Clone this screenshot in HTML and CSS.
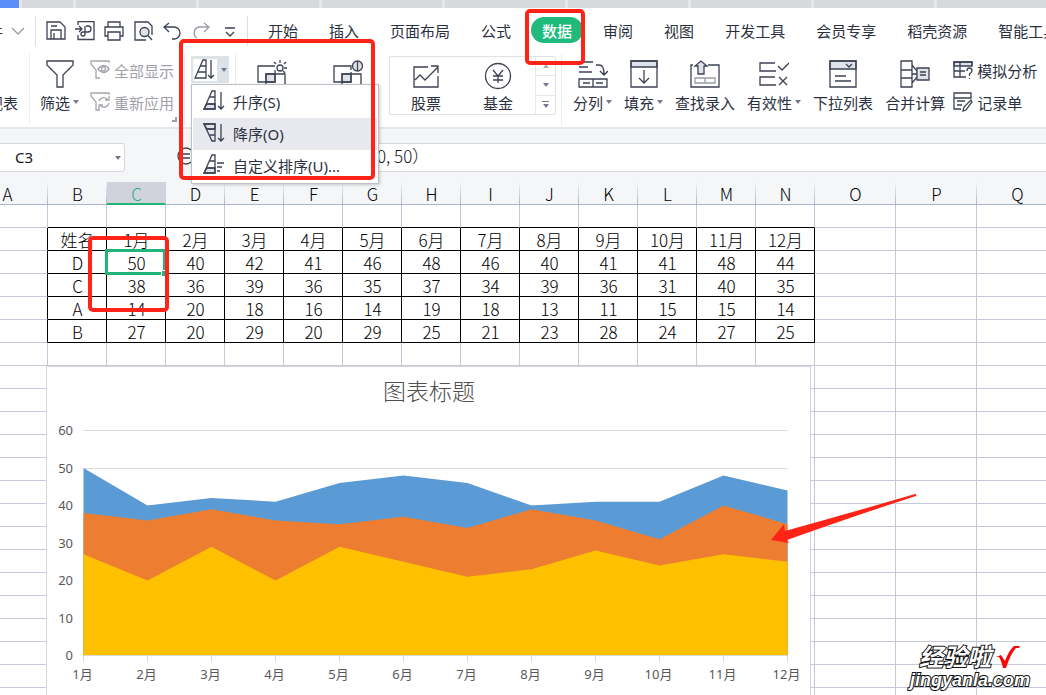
FILE: index.html
```html
<!DOCTYPE html>
<html lang="zh-CN">
<head>
<meta charset="utf-8">
<meta name="viewport" content="width=device-width, initial-scale=1">
<title>表格</title>
<link rel="stylesheet" href="styles.css">
</head>
<body>
<div class="app">
  <div class="doc-tabs">
    <span class="doc-tab doc-home"></span><span class="doc-tab doc-short"></span><span class="doc-tab"></span><span class="doc-tab"></span><span class="doc-tab"></span><span class="doc-tab"></span><span class="doc-tab"></span><span class="doc-tab"></span><span class="doc-tab"></span><span class="doc-tab"></span>
  </div>

  <nav class="menu-row">
    <button class="file-button" type="button">文件
      <svg width="14" height="8" viewBox="0 0 14 8"><path class="grey" d="M1 1l6 6 6-6"/></svg>
    </button>
    <span class="rule"></span>
    <div class="quick">
      <button type="button" aria-label="保存"><svg width="20" height="20" viewBox="0 0 20 20"><path d="M1 1h13l5 5v12H1zM5 18V9h10v9M5 5h6M8 12v6"/></svg></button>
      <button type="button" aria-label="输出为PDF"><svg width="20" height="20" viewBox="0 0 20 20"><path d="M3 4V0.500h16v18H3V14M0 8h7M4 5l3 3-3 3M10 5v8a2 2 0 1 1-2-2h5a3 3 0 0 0 0-6h-2"/></svg></button>
      <button type="button" aria-label="打印"><svg width="20" height="20" viewBox="0 0 20 20"><path d="M4 6V1h12v5M4 15H1V6h18v9h-3M4 11h12v8H4z"/></svg></button>
      <button type="button" aria-label="打印预览"><svg width="20" height="20" viewBox="0 0 20 20"><path d="M13 19H2V1h13l4 4v9"/><circle class="tint" cx="11.500" cy="11" r="4.500"/><path d="M15 14.500L19 19"/></svg></button>
      <button type="button" aria-label="撤销"><svg width="20" height="20" viewBox="0 0 20 20"><path d="M7 2L2 6l5 5M2 6h10a6 6 0 0 1 0 12h-2"/></svg></button>
      <button type="button" aria-label="恢复"><svg width="20" height="20" viewBox="0 0 20 20"><path class="grey" d="M13 2l5 4-5 5M18 6H8a6 6 0 0 0-2 11"/></svg></button>
      <button type="button" aria-label="自定义"><svg width="20" height="20" viewBox="0 0 20 20"><path d="M5 7h10M6 11l4 4 4-4"/></svg></button>
    </div>
    <span class="rule"></span>
    <div class="tabs">
      <button type="button">开始</button><button type="button">插入</button><button type="button">页面布局</button><button type="button">公式</button><button type="button" class="active">数据</button><button type="button">审阅</button><button type="button">视图</button><button type="button">开发工具</button><button type="button">会员专享</button><button type="button">稻壳资源</button><button type="button">智能工具</button>
    </div>
  </nav>

  <div class="ribbon">
    <button type="button" class="tool pivot"><span class="icon"></span><span class="label">数据透视表</span></button>
    <span class="divider"></span>
    <button type="button" class="tool filter">
      <span class="icon"><svg width="28" height="28" viewBox="0 0 28 28"><path d="M1 1h26v4l-10 10v12h-6V15L1 5z"/></svg></span>
      <span class="label">筛选<i class="caret"></i></span>
    </button>
    <div class="stack muted">
      <button type="button"><svg width="20" height="20" viewBox="0 0 20 20"><path d="M10 18H6v-8L1 4V1h18v2"/><path d="M8 9q6-7 11 0-5 7-11 0z"/><circle cx="13.500" cy="9" r="2"/></svg>全部显示</button>
      <button type="button"><svg width="20" height="20" viewBox="0 0 20 20"><path d="M10 18H6v-8L1 4V1h18v2M9 9a5 5 0 0 1 9-1M19 4v4h-4M19 11a5 5 0 0 1-9 2M9 17v-4h4"/></svg>重新应用</button>
    </div>
    <span class="launcher"></span>
    <span class="divider"></span>
    <div class="sort-holder">
      <button type="button" class="sort-button" aria-label="排序">
        <span class="sort-face"><svg width="22" height="22" viewBox="0 0 22 22"><path d="M9 1h3v18H1zM7 7h5M4 13h8M17 1v18M14 16l3 3 3-3"/></svg></span><i class="caret"></i>
      </button>
      <div class="sort-menu">
        <button type="button"><svg width="22" height="22" viewBox="0 0 22 22"><path class="tint" d="M4 14h8v5H1z"/><path d="M9 1h3v18H1zM7 7h5M4 14h8M18 2v17M15 16l3 3 3-3"/></svg>升序(S)</button>
        <button type="button" class="hover"><svg width="22" height="22" viewBox="0 0 22 22"><path class="tint" d="M1 2h11v5H4z"/><path d="M1 2h11v17H9zM4 7h8M7 13h5M18 2v17M15 16l3 3 3-3"/></svg>降序(O)</button>
        <button type="button"><svg width="22" height="22" viewBox="0 0 22 22"><path class="tint" d="M4 14h8v5H1z"/><path d="M9 1h3v18H1zM7 7h5M4 14h8M14 9h7M14 13h5M14 17h3"/></svg>自定义排序(U)...</button>
      </div>
    </div>
    <span class="divider"></span>
    <div class="dup-tools">
      <button type="button" class="tool" aria-label="重复项"><span class="icon"><svg width="30" height="28" viewBox="0 0 30 28"><path class="tint" d="M9 14h9v8H9z"/><path d="M18 10v12H1V6h17M9 27V14h19v13"/><circle cx="23" cy="8" r="3"/><path d="M23 0v3M17 2l2 2M29 2l-2 2M27 8h3M28 13l-2-2"/></svg></span></button>
      <button type="button" class="tool" aria-label="数据对比"><span class="icon"><svg width="30" height="28" viewBox="0 0 30 28"><path class="tint" d="M9 14h9v8H9z"/><path d="M18 12v10H1V6h17v4M9 27V14h19v13"/><circle class="tint" cx="24.500" cy="6" r="5"/><path d="M24.500 1v10"/></svg></span></button>
    </div>
    <div class="gallery">
      <button type="button" class="tool"><span class="icon"><svg width="28" height="28" viewBox="0 0 28 28"><path d="M16 5H2v20h24V14M3 18l5-5 5 5L26 5M19 4h7v7"/></svg></span><span class="label">股票</span></button>
      <button type="button" class="tool"><span class="icon"><svg width="28" height="28" viewBox="0 0 28 28"><circle cx="14" cy="14" r="12.500"/><path d="M9 8l5 6 5-6M14 14v7M9 14h10M9 18h10"/></svg></span><span class="label">基金</span></button>
      <div class="scroller">
        <button type="button" aria-label="上一行"><i class="caret up"></i></button>
        <button type="button" aria-label="下一行"><i class="caret"></i></button>
        <button type="button" aria-label="更多"><i class="bar"></i><i class="caret"></i></button>
      </div>
    </div>
    <span class="divider"></span>
    <div class="data-tools">
      <button type="button" class="tool"><span class="icon"><svg width="30" height="28" viewBox="0 0 30 28"><path d="M1 2h14M1 7h9M1 12h13M18 5h3q5 0 5 9M22 11l4 4 4-4M1 19h28v8H1zM15 19v8M5 23h7M18 23h7"/></svg></span><span class="label">分列<i class="caret"></i></span></button>
      <button type="button" class="tool"><span class="icon"><svg width="28" height="28" viewBox="0 0 28 28"><path class="tint" d="M1 1h26v6H1z"/><path d="M1 1h26v26H1zM14 10v13M9 18l5 5 5-5"/></svg></span><span class="label">填充<i class="caret"></i></span></button>
      <button type="button" class="tool"><span class="icon"><svg width="30" height="28" viewBox="0 0 30 28"><path d="M3 5H1v22h28V5H18"/><path class="tint" d="M8 14V6H5l6-5 6 5h-3v8z"/><path class="grey" d="M5 18h20v5H5zM15 18v5"/></svg></span><span class="label">查找录入</span></button>
      <button type="button" class="tool"><span class="icon"><svg width="30" height="28" viewBox="0 0 30 28"><path d="M16 3H1v8h16M19 6l4 4 7-7M16 17H1v8h16M20 17l8 8M28 17l-8 8"/></svg></span><span class="label">有效性<i class="caret"></i></span></button>
      <button type="button" class="tool"><span class="icon"><svg width="28" height="28" viewBox="0 0 28 28"><path class="tint" d="M1 1h26v8H1z"/><path d="M1 1h26v26H1zM17 4l3 3 3-3M6 16h11M6 21h16"/></svg></span><span class="label">下拉列表</span></button>
      <button type="button" class="tool"><span class="icon"><svg width="30" height="28" viewBox="0 0 30 28"><path d="M1 1h11v26H1zM1 10h11M1 18h11M12 5l5 6M12 14h5M12 23l5-6"/><path class="tint" d="M17 8h12v12H17z"/><path d="M20 12h6M20 15h6"/></svg></span><span class="label">合并计算</span></button>
    </div>
    <div class="stack">
      <button type="button"><svg width="20" height="20" viewBox="0 0 20 20"><path class="tint" d="M1 2h18v4H1z"/><path d="M13 17H1V2h18v4M1 11h11M7 2v15M14 11q0-3 2.500-3t2.500 3q0 1-2.500 3v2M16.500 18v1"/></svg>模拟分析</button>
      <button type="button"><svg width="20" height="20" viewBox="0 0 20 20"><path d="M8 17H1V1h17v5H1M4 9h8M4 13h5M10 19l1-4 7-7 1 2-6 8z"/></svg>记录单</button>
    </div>
  </div>

  <div class="formula-row">
    <div class="name-box"><input type="text" value="C3" aria-label="名称框"><i class="caret"></i></div>
    <svg class="fx" width="18" height="18" viewBox="0 0 18 18"><circle cx="9" cy="9" r="8"/><path d="M5 7h8M5 11h8"/></svg>
    <input class="formula" type="text" value="0, 50）" aria-label="编辑栏">
  </div>

  <main class="sheet">
    <table class="grid">
      <colgroup><col class="wide"><col span="13"><col class="wide" span="3"></colgroup>
      <thead><tr><th>A</th><th>B</th><th class="current">C</th><th>D</th><th>E</th><th>F</th><th>G</th><th>H</th><th>I</th><th>J</th><th>K</th><th>L</th><th>M</th><th>N</th><th>O</th><th>P</th><th>Q</th></tr></thead>
      <tbody id="rows"></tbody>
    </table>

    <svg class="chart" width="766" height="340" viewBox="46 366 766 340" role="img" aria-label="图表标题">
      <rect class="frame" x="46.5" y="366.5" width="764" height="350"/>
      <text class="chart-title" x="429" y="400">图表标题</text>
      <g id="axes"></g>
      <g id="areas"></g>
      <g id="ticks"></g>
    </svg>
    <svg class="arrow" width="148" height="52" viewBox="0 0 148 52"><path d="M1 47L14 31l1 7Q80 20 145 1q2 0 1 2Q90 21 17 47l2 3z"/></svg>
    <div class="watermark"><div class="wm-top">经验啦<svg width="26" height="24" viewBox="0 0 26 24"><path d="M1 12l5-2 4 6Q14 5 19 1h6l-1 2h-3Q16 8 11 23H8Q6 15 4 12z"/></svg></div><div class="wm-url">jingyanla.com</div></div>
  </main>
  <div class="mark mark-sort"></div>
  <div class="mark mark-tab"></div>
  <div class="mark mark-cells"></div>
</div>
<script src="sheet.js"></script>
</body>
</html>
```
FILE: styles.css
```css
* { box-sizing: border-box; }
body { margin: 0; font-family: "Noto Sans", "Noto Sans CJK SC", sans-serif; font-size: 15px; color: #2b3040; background: #fff; }
button { margin: 0; padding: 0; border: 0; background: none; font: inherit; color: inherit; white-space: nowrap; }
input { font: inherit; color: #15171d; border: 0; outline: 0; }
svg { display: block; flex: none; fill: none; stroke: #3d4254; stroke-width: 1.3; }
svg .tint { fill: #dfe2e8; }
svg .grey { stroke: #9a9da5; }
.app { position: relative; display: flex; flex-direction: column; height: 100vh; overflow: hidden; }

.doc-tabs { display: flex; flex: none; gap: 3px; height: 8px; background: #e6e7ea; overflow: hidden; }
.doc-tab { flex: 0 0 120px; background: #d8d9dd; }
.doc-home { flex-basis: 19px; background: #5b8df6; }
.doc-short { flex-basis: 51px; }

.menu-row { display: flex; flex: none; align-items: center; height: 46px; overflow: hidden; }
.file-button { display: flex; align-items: center; gap: 8px; margin-left: -27px; margin-right: 10px; }
.rule { flex: none; width: 1px; height: 30px; background: #dcdde1; }
.quick { display: flex; gap: 9px; padding: 0 7px 0 10px; }
.tabs { display: flex; align-items: center; gap: 31px; height: 46px; padding: 0 0 2px 20px; }
.tabs .active { margin: 0 -11px; padding: 0 11px; height: 26px; border-radius: 13px; background: #21ba7d; color: #fff; font-weight: 500; }

.ribbon { display: flex; flex: none; height: 75px; padding-bottom: 2px; border-bottom: 2px solid #e6e7ea; }
.divider { flex: none; width: 1px; background: #ebecef; }
.tool { display: flex; flex: none; flex-direction: column; align-items: center; padding-top: 6px; }
.icon { display: flex; height: 28px; }
.label { display: flex; align-items: center; height: 28px; }
.caret { display: inline-block; flex: none; margin-left: 3px; border: 3px solid transparent; border-top: 4px solid #737a91; border-bottom: 0; }
.caret.up { border-top: 0; border-bottom: 4px solid #a9adba; }
.pivot { margin-left: -57px; margin-right: 11px; }
.filter { margin-left: 10px; margin-right: 11px; }
.stack { display: flex; flex: none; flex-direction: column; gap: 10px; padding-top: 5px; }
.stack button { display: flex; align-items: center; gap: 4px; height: 22px; }
.muted { color: #9fa1a8; }
.muted svg { stroke: #a4a6ad; }
.launcher { align-self: flex-end; flex: none; width: 5px; height: 5px; margin: 0 7px 3px -2px; border: solid #9aa0b0; border-width: 0 2px 2px 0; }
.sort-holder { position: relative; padding: 2px 6px 0; }
.sort-button { display: flex; align-items: center; width: 38px; height: 27px; padding: 2px; background: #dde2e7; border-radius: 1px; }
.sort-face { padding: 0 1px; background: #fff; }
.sort-button .caret { margin-left: 4px; }
.sort-menu { position: absolute; z-index: 3; top: 30px; left: 6px; width: 188px; padding: 1px; background: #fff; border: 1px solid #bfc1c7; box-shadow: 1px 1px 3px #0003; }
.sort-menu button { display: flex; align-items: center; gap: 8px; width: 100%; height: 32px; padding: 0 0 2px 10px; }
.sort-menu .hover { background: #e7e9ee; }
.dup-tools { display: flex; gap: 46px; padding-left: 21px; }
.gallery { display: flex; flex: none; height: 59px; margin: 2px 5px 0 26px; border: 1px solid #dfe1e5; border-radius: 2px; }
.gallery .tool { width: 72px; padding-top: 5px; }
.scroller { display: flex; flex-direction: column; width: 20px; margin-left: 1px; border-left: 1px solid #e6e8ec; }
.scroller button { display: flex; flex: 1; flex-direction: column; align-items: center; justify-content: center; gap: 2px; border-bottom: 1px solid #e6e8ec; }
.scroller button:last-child { border: 0; }
.scroller .caret { margin: 0; }
.bar { width: 7px; height: 1px; background: #737a91; }
.data-tools { display: flex; gap: 12px; margin: 0 8px 0 11px; }

.formula-row { display: flex; flex: none; align-items: center; height: 53px; padding: 14px 0 10px; background: #f5f6f8; }
.name-box { display: flex; align-items: center; width: 125px; height: 29px; padding-right: 3px; background: #fff; border: 1px solid #d6d8de; border-left: 0; border-radius: 0 3px 3px 0; }
.name-box input { flex: 1; min-width: 0; padding: 0 0 2px 15px; }
.fx { margin: 0 2px 4px 52px; }
.formula { flex: 1; min-width: 0; height: 29px; padding: 0 0 4px 180px; border: solid #d6d8de; border-width: 1px 0; font-family: "Noto Sans CJK SC", sans-serif; font-size: 17px; font-weight: 300; }

.sheet { position: relative; flex: 1; min-height: 0; overflow: hidden; }
.grid { width: 1089px; margin-left: -33px; table-layout: fixed; border-collapse: separate; border-spacing: 0; font-family: "Noto Sans CJK SC", sans-serif; font-size: 17px; font-weight: 300; color: #000; }
.grid col { width: 59px; }
.grid col.wide { width: 81px; }
.grid th, .grid td { height: 23px; padding: 2px 0 0 1px; line-height: 18px; text-align: center; border: solid #c3c9db; border-width: 0 1px 1px 0; white-space: nowrap; }
.grid th { font-weight: 300; background: #f5f6f8; border-color: #a9b3cc; border-image: linear-gradient(#f5f6f8, #a9b3cc) 1; }
.grid .current { color: #21b57a; background: #d0d3dc; border-image: none; border-right-color: #d0d3dc; border-bottom: 2px solid #21b57a; }
.grid .edge-bottom { border-bottom-color: #000; }
.grid .edge-right { border-right-color: #000; }
.grid .selected { position: relative; }
.grid .selected::before { content: ""; position: absolute; inset: -2px -1px -2px -2px; border: 3px solid #21b57a; }
.grid .selected::after { content: ""; position: absolute; right: -2px; bottom: -3px; width: 5px; height: 5px; background: #21b57a; border: solid #fff; border-width: 1px 0 0 1px; }

.chart { position: absolute; left: 46px; top: 184px; stroke: none; font-family: "Noto Sans", "Noto Sans CJK SC", sans-serif; font-size: 13px; }
.chart text { fill: #595959; stroke: none; text-anchor: middle; }
.chart .y-label { text-anchor: end; }
.chart .chart-title { font-size: 23px; font-weight: 300; fill: #505050; }
.frame { fill: #fff; stroke: #d4d5d8; stroke-width: 1; }
.gridline { stroke: #d9d9d9; stroke-width: 1; }
.area-d { fill: #5b9bd5; }
.area-c { fill: #ed7d31; }
.area-b { fill: #ffc000; }
.arrow { position: absolute; left: 770px; top: 311px; stroke: none; fill: #ff2416; }
.watermark { position: absolute; right: 16px; bottom: 4px; color: #fff; font-weight: 700; font-style: italic; text-align: center; -webkit-text-stroke: 2px #111; paint-order: stroke fill; }
.wm-top { display: flex; justify-content: center; gap: 4px; height: 24px; line-height: 24px; font-size: 24px; }
.wm-top svg { stroke: none; fill: #f80808; }
.wm-url { height: 22px; line-height: 22px; font-family: "Liberation Sans", sans-serif; font-size: 18px; }

.mark { position: absolute; z-index: 5; border: 4px solid #ff2318; border-radius: 5px; pointer-events: none; }
.mark-sort { left: 179px; top: 39px; width: 196px; height: 141px; }
.mark-tab { left: 525px; top: 9px; width: 60px; height: 56px; }
.mark-cells { left: 88px; top: 236px; width: 81px; height: 76px; }
```
FILE: sheet.js
```js
const data = [
  ['姓名', '1月', '2月', '3月', '4月', '5月', '6月', '7月', '8月', '9月', '10月', '11月', '12月'],
  ['D', 50, 40, 42, 41, 46, 48, 46, 40, 41, 41, 48, 44],
  ['C', 38, 36, 39, 36, 35, 37, 34, 39, 36, 31, 40, 35],
  ['A', 14, 20, 18, 16, 14, 19, 18, 13, 11, 15, 15, 14],
  ['B', 27, 20, 29, 20, 29, 25, 21, 23, 28, 24, 27, 25]
];
const rowCount = 40;
const columnCount = 17;
const lastDataColumn = data[0].length;

const body = document.getElementById('rows');
for (let r = 0; r < rowCount; r++) {
  const tr = body.insertRow();
  for (let c = 0; c < columnCount; c++) {
    const td = tr.insertCell();
    const values = data[r - 1];
    if (values && c >= 1 && c <= lastDataColumn) td.textContent = values[c - 1];
    if (r <= data.length && c >= 1 && c <= lastDataColumn) td.classList.add('edge-bottom');
    if (values && c <= lastDataColumn) td.classList.add('edge-right');
    if (r === 2 && c === 2) td.classList.add('selected');
  }
}

// Chart scale
const left = 83.5, step = 64, base = 655.5, unit = 3.75;
const x = i => left + i * step;
const y = v => base - v * unit;
const right = x(11);

let axes = '';
for (let v = 0; v <= 60; v += 10) {
  const line = Math.floor(y(v)) + 0.5;
  axes += `<path class="gridline" d="M${left} ${line}H${right}"/><text class="y-label" x="73" y="${line + 4}">${v}</text>`;
}
document.getElementById('axes').innerHTML = axes;

let areas = '';
[[1, 'area-d'], [2, 'area-c'], [4, 'area-b']].forEach(([row, name]) => {
  const points = data[row].slice(1).map((v, i) => `${x(i)},${y(v)}`).join(' ');
  areas += `<polygon class="${name}" points="${left},${base} ${points} ${right},${base}"/>`;
});
document.getElementById('areas').innerHTML = areas;

let ticks = `<path class="gridline" d="M${left} ${base}H${right}"/>`;
data[0].slice(1).forEach((m, i) => {
  ticks += `<path class="gridline" d="M${x(i)} 656V662"/><text x="${x(i) - 1}" y="679">${m}</text>`;
});
document.getElementById('ticks').innerHTML = ticks;
```
